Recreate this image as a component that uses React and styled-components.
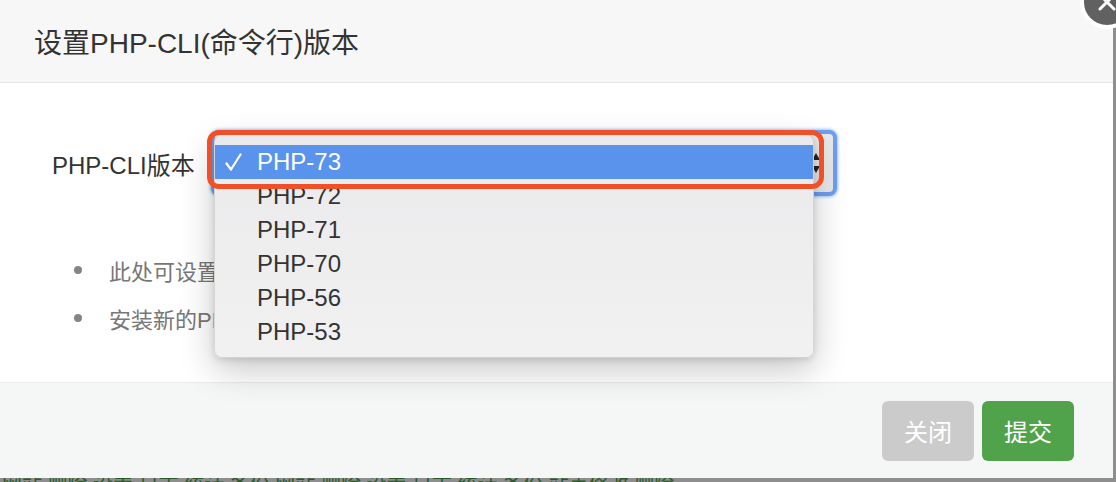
import React from "react";
import styled, { createGlobalStyle } from "styled-components";

const GlobalStyle = createGlobalStyle`
  html, body {
    margin: 0;
    padding: 0;
    background: #8e8e8e;
    overflow: hidden;
  }
  * {
    box-sizing: border-box;
  }
`;

const FONT = `"Liberation Sans", "Noto Sans CJK SC", sans-serif`;

const Page = styled.div`
  width: 1116px;
  height: 482px;
  overflow: hidden;
  background: #8e8e8e;
  font-family: ${FONT};
`;

const Dialog = styled.div`
  position: relative;
  width: 1113px;
  height: 478px;
  background: #fff;
  display: flex;
  flex-direction: column;
`;

const Header = styled.div`
  height: 83px;
  padding-left: 34px;
  display: flex;
  align-items: center;
  background: #f7f7f7;
  border-bottom: 1px solid #e6e6e6;
  font-size: 28px;
  color: #333;
`;

const CloseButton = styled.div`
  position: absolute;
  top: -25px;
  right: -21px;
  width: 54px;
  height: 54px;
  border-radius: 50%;
  background: #616161;
  border: 4px solid #fff;
  display: flex;
  align-items: center;
  justify-content: center;
  z-index: 3;
`;

const Body = styled.div`
  flex: 1;
  padding-top: 47px;
`;

const FormRow = styled.div`
  display: flex;
  align-items: center;
  height: 66px;
`;

const Label = styled.div`
  width: 211px;
  padding-left: 52px;
  font-size: 24px;
  color: #333;
`;

const SelectWrap = styled.div`
  position: relative;
  width: 626px;
  height: 66px;
`;

const SelectBox = styled.div`
  width: 100%;
  height: 100%;
  border-radius: 8px;
  border: 4px solid #6d9ff0;
  box-shadow: 0 0 3px 1px rgba(80, 140, 240, 0.55);
  background: #e8e8e8;
  display: flex;
  align-items: center;
  justify-content: flex-end;
  padding-right: 12px;
`;

const Menu = styled.div`
  position: absolute;
  left: 3px;
  top: 4px;
  width: 600px;
  padding: 10px 0 8px;
  border-radius: 8px;
  background: linear-gradient(#eaeaec, #f1f1f1);
  border: 1px solid rgba(0, 0, 0, 0.1);
  box-shadow: 0 12px 34px rgba(0, 0, 0, 0.22), 0 2px 6px rgba(0, 0, 0, 0.12);
  z-index: 1;
`;

const Option = styled.div`
  height: 34px;
  display: flex;
  align-items: center;
  padding-left: 10px;
  font-size: 24px;
  color: ${(p) => (p.selected ? "#fff" : "#333")};
  background: ${(p) => (p.selected ? "#5993ec" : "transparent")};
`;

const Check = styled.span`
  width: 32px;
  display: flex;
  align-items: center;
`;

const Highlight = styled.div`
  position: absolute;
  left: -4px;
  top: 0;
  width: 617px;
  height: 59px;
  border: 5px solid #ef5027;
  border-radius: 12px;
  pointer-events: none;
  z-index: 2;
`;

const TipList = styled.ul`
  list-style: none;
  margin: 50px 0 0;
  padding: 0 0 0 74px;
`;

const Tip = styled.li`
  height: 48px;
  display: flex;
  align-items: center;
  font-size: 22px;
  color: #777;
  white-space: nowrap;
`;

const Dot = styled.span`
  width: 8px;
  height: 8px;
  border-radius: 50%;
  background: #858585;
  margin-right: 27px;
  flex-shrink: 0;
`;

const Footer = styled.div`
  height: 96px;
  display: flex;
  align-items: center;
  justify-content: flex-end;
  gap: 8px;
  padding-right: 39px;
  background: #f5f7f6;
  border-top: 1px solid #ebebeb;
`;

const Button = styled.div`
  width: 92px;
  height: 60px;
  border-radius: 6px;
  display: flex;
  align-items: center;
  justify-content: center;
  font-size: 24px;
  color: #fff;
  background: ${(p) => (p.primary ? "#50a34b" : "#cbcbcb")};
`;

const Backdrop = styled.div`
  height: 4px;
  overflow: hidden;
  padding-left: 2px;
  font-size: 20px;
  line-height: 14px;
  color: #2c5a2c;
  white-space: nowrap;
`;

const versions = ["PHP-73", "PHP-72", "PHP-71", "PHP-70", "PHP-56", "PHP-53"];

export default function App() {
  return (
    <Page>
      <GlobalStyle />
      <Dialog>
        <Header>设置PHP-CLI(命令行)版本</Header>
        <CloseButton>
          <svg width="22" height="22" viewBox="0 0 22 22">
            <path d="M4 4L18 18M18 4L4 18" stroke="#fff" strokeWidth="3" strokeLinecap="round" />
          </svg>
        </CloseButton>
        <Body>
          <FormRow>
            <Label>PHP-CLI版本</Label>
            <SelectWrap>
              <SelectBox>
                <svg width="10" height="24" viewBox="0 0 10 24">
                  <path d="M5 2L9 9H1Z" fill="#222" />
                  <path d="M5 22L9 15H1Z" fill="#222" />
                </svg>
              </SelectBox>
              <Menu>
                {versions.map((v, i) => (
                  <Option key={v} selected={i === 0}>
                    <Check>
                      {i === 0 && (
                        <svg width="17" height="18" viewBox="0 0 17 18">
                          <path d="M1.5 10.5L6 16.5L15.5 1.5" fill="none" stroke="#fff" strokeWidth="2.2" strokeLinecap="round" strokeLinejoin="round" />
                        </svg>
                      )}
                    </Check>
                    {v}
                  </Option>
                ))}
              </Menu>
              <Highlight />
            </SelectWrap>
          </FormRow>
          <TipList>
            <Tip>
              <Dot />
              此处可设置命令行运行php时使用的PHP版本
            </Tip>
            <Tip>
              <Dot />
              安装新的PHP版本后，这里需要重新设置
            </Tip>
          </TipList>
        </Body>
        <Footer>
          <Button>关闭</Button>
          <Button primary>提交</Button>
        </Footer>
      </Dialog>
      <Backdrop>网站 删除 设置 日志 统计 备份 网站 删除 设置 日志 统计 备份 站点修改 删除</Backdrop>
    </Page>
  );
}
